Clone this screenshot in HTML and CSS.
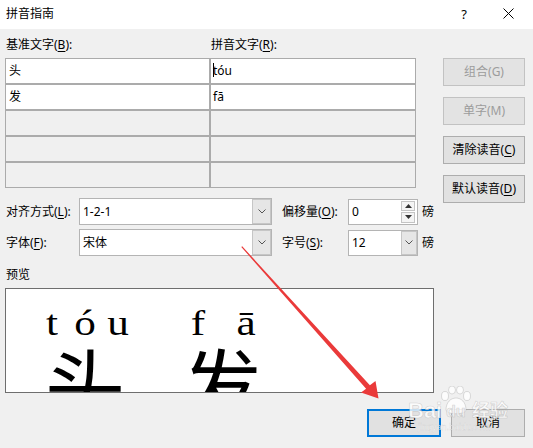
FILE: index.html
```html
<!DOCTYPE html>
<html lang="zh-CN">
<head>
<meta charset="utf-8">
<title>拼音指南</title>
<link rel="stylesheet" href="styles.css">
</head>
<body>
<div class="titlebar">
  <span class="title">拼音指南</span>
  <span class="tb-btn help">?</span>
  <span class="tb-btn close"><svg width="11" height="11" viewBox="0 0 11 11"><path d="M0.5 0.5 L10.5 10.5 M10.5 0.5 L0.5 10.5" stroke="#000" stroke-width="1" fill="none"/></svg></span>
</div>
<div class="content">
  <div class="top">
    <div class="left">
      <div class="heads">
        <span>基准文字(<u>B</u>):</span>
        <span>拼音文字(<u>R</u>):</span>
      </div>
      <div class="table">
        <div class="cell">头</div>
        <div class="cell c2"><span class="caret"></span>tóu</div>
        <div class="cell">发</div>
        <div class="cell c2">fā</div>
        <div class="cell off"></div>
        <div class="cell off"></div>
        <div class="cell off"></div>
        <div class="cell off"></div>
        <div class="cell off"></div>
        <div class="cell off"></div>
      </div>

      <div class="opt-row first">
        <span class="lbl1">对齐方式(<u>L</u>):</span>
        <div class="combo"><span class="val">1-2-1</span><span class="drop"><svg width="8" height="5" viewBox="0 0 8 5"><polyline points="0.5,0.5 4,4 7.5,0.5" fill="none" stroke="#555" stroke-width="1"/></svg></span></div>
        <span class="lbl2">偏移量(<u>O</u>):</span>
        <div class="spin"><span class="val">0</span><span class="arrows"><span><svg width="7" height="4" viewBox="0 0 7 4"><polygon points="0,4 3.5,0 7,4" fill="#333"/></svg></span><span><svg width="7" height="4" viewBox="0 0 7 4"><polygon points="0,0 3.5,4 7,0" fill="#333"/></svg></span></span></div>
        <span class="unit">磅</span>
      </div>
      <div class="opt-row">
        <span class="lbl1">字体(<u>F</u>):</span>
        <div class="combo"><span class="val">宋体</span><span class="drop"><svg width="8" height="5" viewBox="0 0 8 5"><polyline points="0.5,0.5 4,4 7.5,0.5" fill="none" stroke="#555" stroke-width="1"/></svg></span></div>
        <span class="lbl2">字号(<u>S</u>):</span>
        <div class="combo small"><span class="val">12</span><span class="drop"><svg width="8" height="5" viewBox="0 0 8 5"><polyline points="0.5,0.5 4,4 7.5,0.5" fill="none" stroke="#555" stroke-width="1"/></svg></span></div>
        <span class="unit">磅</span>
      </div>

      <div class="pv-label">预览</div>
      <div class="preview">
        <div class="ruby r1">
          <div class="py"><span>t</span><span>ó</span><span>u</span></div>
          <div class="hz"><span>头</span></div>
        </div>
        <div class="ruby r2">
          <div class="py"><span>f</span><span>ā</span></div>
          <div class="hz"><span>发</span></div>
        </div>
      </div>
    </div>
    <div class="side">
      <div class="btn dis">组合(G)</div>
      <div class="btn dis">单字(M)</div>
      <div class="btn">清除读音(<u>C</u>)</div>
      <div class="btn">默认读音(<u>D</u>)</div>
    </div>
  </div>

  <div class="footer">
    <div class="btn ok">确定</div>
    <div class="btn">取消</div>
  </div>
</div>

<div class="watermark">
  <span class="wm-bai">Bai</span>
  <svg class="wm-paw" width="32" height="30" viewBox="0 0 32 30">
    <g fill="rgba(255,255,255,0.8)" stroke="rgba(150,150,150,0.4)" stroke-width="0.8">
      <ellipse cx="5" cy="10" rx="3.5" ry="4.5"/>
      <ellipse cx="12" cy="4" rx="3.5" ry="4"/>
      <ellipse cx="20" cy="4" rx="3.5" ry="4"/>
      <ellipse cx="27" cy="10" rx="3.5" ry="4.5"/>
      <path d="M6 24 C6 16 11 12 16 12 C21 12 26 16 26 24 C26 29 6 29 6 24 Z"/>
    </g>
  </svg>
  <span class="wm-du">du</span>
  <span class="wm-jy">经验</span>
  <span class="wm-url">jingyan.baidu.com</span>
</div>

<svg class="arrow" width="533" height="448" viewBox="0 0 533 448">
  <polygon points="241.3,247 242.2,246.3 369.9,385.3 375.5,381 378.5,398.5 361,392.4 366.1,388.7" fill="#ea3a3a"/>
</svg>
</body>
</html>
```

FILE: styles.css
```css
* {
  box-sizing: border-box;
}

html,
body {
  margin: 0;
  padding: 0;
}

body {
  width: 533px;
  height: 448px;
  background: #f0f0f0;
  font-family: "Noto Sans", "Noto Sans CJK SC", sans-serif;
  font-size: 12px;
  line-height: 16px;
  color: #000;
  overflow: hidden;
  position: relative;
}

u {
  text-decoration: underline;
  text-underline-offset: 2px;
}

/* title bar */
.titlebar {
  height: 29px;
  background: #fff;
  display: flex;
  align-items: center;
  padding-left: 6px;
  padding-right: 3px;
  padding-bottom: 2px;
}

.title {
  flex: 1;
}

.tb-btn {
  width: 44px;
  height: 27px;
  display: flex;
  align-items: center;
  justify-content: center;
  font-size: 13px;
}

/* main content */
.content {
  padding: 0 8px 0 5px;
}

.top {
  display: flex;
  align-items: flex-start;
}

.left {
  width: 429px;
}

.heads {
  width: 411px;
  height: 29px;
  padding-top: 3px;
  display: grid;
  grid-template-columns: 205px 206px;
  align-items: center;
}

.heads span {
  padding-left: 1px;
}

.table {
  width: 411px;
  display: grid;
  grid-template-columns: 205px 206px;
  grid-auto-rows: 26px;
}

.cell {
  border: 1px solid #ababab;
  background: #fff;
  padding-left: 3px;
  display: flex;
  align-items: center;
}

.cell.c2 {
  padding-left: 2px;
}

.cell.off {
  background: #f0f0f0;
}

.caret {
  display: inline-block;
  width: 1px;
  height: 14px;
  background: #000;
  margin-right: -1px;
  position: relative;
  top: -1px;
}

.side {
  margin-left: 9px;
  width: 82px;
  padding-top: 29px;
  display: flex;
  flex-direction: column;
  gap: 11px;
}

.btn {
  height: 28px;
  background: #e1e1e1;
  border: 1px solid #adadad;
  display: flex;
  align-items: center;
  justify-content: center;
  color: #000;
}

.btn.dis {
  color: #9c9c9c;
  border-color: #c2c2c2;
  background: #e3e3e3;
}

/* option rows */
.opt-row {
  display: flex;
  align-items: center;
  height: 27px;
}

.opt-row.first {
  margin-top: 10px;
}

.opt-row + .opt-row {
  margin-top: 4px;
}

.lbl1 {
  width: 74px;
  padding-left: 1px;
}

.lbl2 {
  margin-left: 10px;
  width: 66px;
}

.combo {
  width: 193px;
  height: 27px;
  border: 1px solid #b4b4b4;
  background: #fff;
  display: flex;
}

.combo.small {
  width: 70px;
  height: 26px;
}

.val {
  flex: 1;
  padding-left: 3px;
  display: flex;
  align-items: center;
}

.drop {
  width: 19px;
  background: #e6e6e6;
  border: 1px solid #c6c6c6;
  display: flex;
  align-items: center;
  justify-content: center;
}

.combo.small .drop {
  width: 16px;
}

.spin {
  width: 70px;
  height: 26px;
  border: 1px solid #b4b4b4;
  background: #fff;
  display: flex;
}

.arrows {
  width: 14px;
  margin: 1px 2px 1px 0;
  display: flex;
  flex-direction: column;
  gap: 1px;
}

.arrows span {
  flex: 1;
  border: 1px solid #c4c4c4;
  background: #f4f4f4;
  display: flex;
  align-items: center;
  justify-content: center;
}

.unit {
  margin-left: 4px;
}

/* preview */
.pv-label {
  margin-top: 11px;
  height: 16px;
  margin-bottom: 5px;
  padding-left: 1px;
}

.preview {
  width: 429px;
  height: 105px;
  border: 1px solid #6e6e6e;
  background: #fff;
  overflow: hidden;
  display: flex;
  padding-top: 16px;
}

.ruby {
  display: flex;
  flex-direction: column;
}

.r1 {
  width: 90px;
  margin-left: 34px;
}

.r2 {
  width: 72px;
  margin-left: 56px;
}

.py {
  height: 36px;
  display: flex;
  justify-content: space-between;
  font-family: "Liberation Serif", serif;
  font-size: 36px;
  line-height: 36px;
}

.py span {
  display: inline-block;
  width: 24px;
  text-align: center;
  transform: scaleX(1.2);
}

.hz {
  display: flex;
  justify-content: center;
  font-family: "Noto Sans CJK SC", sans-serif;
  font-size: 80px;
  line-height: 80px;
  font-weight: 400;
}

/* footer */
.footer {
  margin-top: 16px;
  display: flex;
  justify-content: flex-end;
  gap: 10px;
}

.footer .btn {
  width: 74px;
}

.btn.ok {
  border: 2px solid #0078d7;
}

/* watermark overlay */
.watermark {
  position: absolute;
  left: 406px;
  top: 386px;
  width: 110px;
  height: 50px;
  pointer-events: none;
  color: rgba(255, 255, 255, 0.78);
  -webkit-text-stroke: 0.6px rgba(150, 150, 150, 0.4);
  font-family: "Liberation Sans", sans-serif;
  font-weight: bold;
}

.wm-bai {
  position: absolute;
  left: 2px;
  top: 13px;
  font-size: 22px;
  line-height: 24px;
}

.wm-paw {
  position: absolute;
  left: 34px;
  top: 0;
}

.wm-du {
  position: absolute;
  left: 40px;
  top: 17px;
  font-size: 16px;
  line-height: 18px;
  color: rgba(240, 240, 240, 0.85);
}

.wm-jy {
  position: absolute;
  left: 66px;
  top: 12px;
  font-size: 18px;
  line-height: 22px;
  font-family: "Noto Sans CJK SC", sans-serif;
}

.wm-url {
  position: absolute;
  left: 12px;
  top: 36px;
  font-size: 9px;
  line-height: 10px;
  font-weight: normal;
  -webkit-text-stroke: 0.3px rgba(150, 150, 150, 0.35);
}

/* red annotation arrow */
.arrow {
  position: absolute;
  left: 0;
  top: 0;
  pointer-events: none;
}
```
